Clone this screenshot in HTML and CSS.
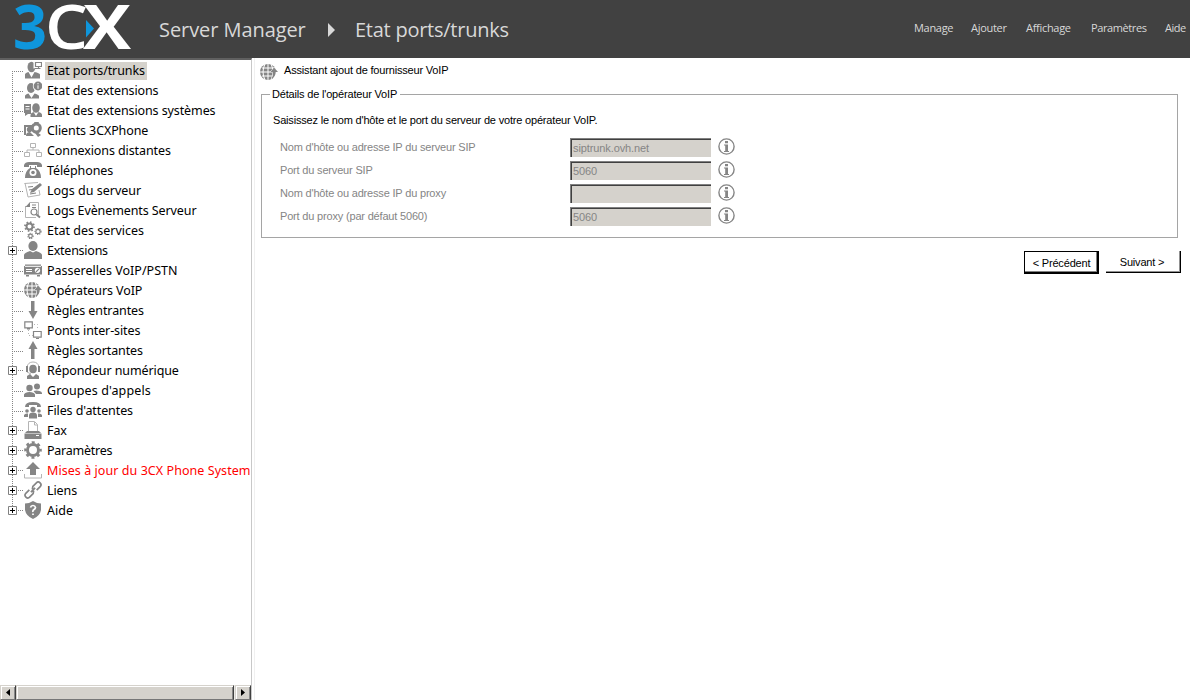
FILE: index.html
```html
<!DOCTYPE html>
<html lang="fr">
<head>
<meta charset="utf-8">
<title>3CX Server Manager</title>
<link rel="stylesheet" href="styles.css">
</head>
<body>
<svg class="defs" width="0" height="0">
  <symbol id="person" viewBox="0 0 18 18"><ellipse cx="9" cy="5" rx="4.600" ry="5"/><path d="M0 18v-4q0-2 6-4l3 1.500 3-1.500q6 2 6 4v4z"/></symbol>
  <symbol id="i-ports" viewBox="0 0 18 18"><ellipse cx="7.500" cy="6" rx="4" ry="5.200"/><path d="M1 17.500v-4q0-1.500 3.500-2.500l3 5.500 3-5.500q5 1 5.500 2.500v4z"/><path class="w" d="M9.500 0h9v7.500h-9z"/><path class="s" d="M11.500 1.500h6v4h-6zM14.500 6v1.500M10.500 7.500h6"/></symbol>
  <symbol id="i-ext" viewBox="0 0 18 18"><ellipse cx="7" cy="7" rx="4" ry="5"/><path d="M1 17.500v-2.500q0-1.500 3.500-2.500l3 4.500 3-4.500q4 1 4.500 2.500v2.500z"/><circle class="w" cx="14" cy="5" r="5.200"/><circle cx="14" cy="5" r="4.400"/><path class="ws" d="M14 4.300v3.500M14 2v1.300"/></symbol>
  <symbol id="i-sys" viewBox="0 0 18 18"><path d="M0 3h7v10H4l-3 2v-3H0z"/><path class="ws" d="M1.500 5.500h4M1.500 8h4"/><ellipse cx="12" cy="7" rx="3.800" ry="4.800"/><path d="M6.500 16v-2q0-2 3-3l2.500 4 2.500-4q3.500 1 3.500 3v2z"/></symbol>
  <symbol id="i-client" viewBox="0 0 18 18"><path d="M0 4h8v2H2v8H0z"/><circle cx="5.500" cy="8.500" r="2.700"/><path d="M2 15q0-4 4-4l4 4z"/><circle class="s3" cx="12.300" cy="7" r="4"/><path d="M10 1h5l-1 2h-3zM13 11l4 3-3 2-3-4z"/></symbol>
  <symbol id="i-remote" viewBox="0 0 18 18"><path class="l" d="M6.500 2.500h5v4h-5zM.5 11.500h5v4h-5zM12.500 11.500h5v4h-5zM9 7v2M3 11V9h12v2"/></symbol>
  <symbol id="i-phone" viewBox="0 0 18 18"><path d="M0 6V4q1-3 5-3h8q4 0 5 3v2h-5V4H5v2zM6 5h1v2h4V5h1v2q5 3 5 10H1q0-7 5-10z"/><circle class="w" cx="9" cy="11.500" r="3.500"/><circle cx="9" cy="11.500" r="1.800"/></symbol>
  <symbol id="i-log" viewBox="0 0 18 18"><path class="l" d="M.5 2.500 14 1.500M1 2l3 14 12-2-1-5"/><path class="s" d="M4 6l5-.5M5 9l3-.5M6 13l6-1"/><path d="M6 12l2-4 8-6 2 2-8 7z"/></symbol>
  <symbol id="i-event" viewBox="0 0 18 18"><path class="l" d="M6 1.500h8.500V16M1.500 5v11.500H12"/><path d="M1.500 6 6 1v5z"/><path class="s" d="M8 4h4M8 6.500h4"/><circle class="s" cx="10" cy="11" r="3"/><path class="s2" d="M12.500 13.500 16 16.500"/></symbol>
  <symbol id="i-services" viewBox="0 0 18 18"><circle class="s2" cx="5.500" cy="5.500" r="3"/><circle class="teeth" cx="5.500" cy="5.500" r="4.500"/><circle class="s" cx="14" cy="10.500" r="2.200"/><circle class="tooth" cx="14" cy="10.500" r="3"/><circle class="s" cx="6.500" cy="15" r="1.800"/><circle class="tooth" cx="6.500" cy="15" r="2.600"/></symbol>
  <symbol id="i-gateway" viewBox="0 0 18 18"><path d="M0 5h18v8.500H0zM1 3.500h16V5H1zM2 14h3v1.500H2zM13 14h3v1.500h-3z"/><path class="ws" d="M1 5.300h16M2 8.500h6M2 10.500h6"/><circle class="w" cx="13.500" cy="9.300" r="2.600"/><path class="s" d="M12 10.800 15 7.800"/></symbol>
  <symbol id="i-globe" viewBox="0 0 18 18"><circle cx="8" cy="9" r="8"/><path class="ws" d="M8 1v16M0 9h12M2 5h13M2 13h13M5 1q-4 8 0 16M11 1q4 8 0 16"/><path class="w" d="M14 4l4.500 4.500V18H13V9h-3z"/><path d="M14 4.500l4 4.500h-2.300q0 4.500-4.200 7 1.700-3 1.500-7h-2.500z"/></symbol>
  <symbol id="i-down" viewBox="0 0 18 18"><path d="M7 0h3.500v10H13.500L9 18 4.500 10H7z"/></symbol>
  <symbol id="i-up" viewBox="0 0 18 18"><path d="M7 18h3.500V8h3.000L9 0 4.500 8H7z"/></symbol>
  <symbol id="i-bridge" viewBox="0 0 18 18"><path class="s" d="M.8 .8h7.500v6H.8zM9.500 10.500h7.700v5.700H9.500zM3 8h3M12 17.500h3"/><path class="l dot" d="M10 3.500h3.500V9M4.500 9v5.500H9"/></symbol>
  <symbol id="i-voice" viewBox="0 0 18 18"><path class="l" d="M3 8V6q1-5 6-5t6 5v2M3 11l4 2"/><path d="M2 5h2v6H2zM14 5h2v6h-2z"/><ellipse cx="9" cy="8" rx="3.800" ry="4.300"/><path d="M3 18v-3l3-2 3 3 3-3 3 2v3z"/></symbol>
  <symbol id="i-group" viewBox="0 0 18 18"><circle cx="5.500" cy="7" r="3.200"/><circle cx="13" cy="5.500" r="3"/><path d="M0 16v-2.500q1-2.500 5.500-2.500t5.500 2.500V16zM9.500 10q3-1 6 0t2.500 3h-6z"/></symbol>
  <symbol id="i-queue" viewBox="0 0 18 18"><path d="M1 6q0-5 8-5t8 5h-4V4H5v2z"/><circle cx="9" cy="8.500" r="2.700"/><circle cx="3" cy="10" r="1.800"/><circle cx="15" cy="10" r="1.800"/><path d="M5 17.500v-3q0-3 4-3t4 3v3zM0 16v-2q1-2 4-1.500V16zM18 16v-2q-1-2-4-1.500V16z"/></symbol>
  <symbol id="i-fax" viewBox="0 0 18 18"><path class="l" d="M4.500 10V.5h6l3 3V10M10.500 1v3h3"/><path d="M3 10h12l2 2H1zM.5 12.500h17V18H.5z"/><path class="ws" d="M12 14.500h3"/></symbol>
  <symbol id="i-gear" viewBox="0 0 18 18"><circle class="s3" cx="9" cy="9" r="5.500"/><circle class="gear" cx="9" cy="9" r="7.600"/></symbol>
  <symbol id="i-update" viewBox="0 0 18 18"><path d="M9 1l7 7h-4v6H6V8H2z"/><path class="l" d="M.5 13v4h17v-4"/></symbol>
  <symbol id="i-link" viewBox="0 0 18 18"><g class="link" transform="rotate(-45 9 9)"><path d="M6.500 6.300H1.500Q-1 6.300-1 9t2.500 2.700h5L9 10M11.500 11.700h5Q19 11.700 19 9t-2.500-2.700h-5L9 8M6 9h6"/></g></symbol>
  <symbol id="i-help" viewBox="0 0 18 18"><path d="M9 0q4 2.500 8 2.500V9q-1 6-8 9Q2 15 1 9V2.500Q5 2.500 9 0z"/><path class="q" d="M6.500 6.500Q7 4.500 9 4.500t2.500 2q0 1-1.500 2t-1 2.500M9 12.500v1.500"/></symbol>
  <symbol id="i-info" viewBox="0 0 17 17"><circle class="ring" cx="8.500" cy="8.500" r="7.600"/><path d="M7 3h3v2.300H7zM6 6.500h4V13h1v1H6v-1h1.200V7.500H6z"/></symbol>
  <symbol id="b-first" viewBox="0 0 24 20"><path class="dots" d="M12.500 10v10M12 10.500h11"/></symbol>
  <symbol id="b-mid" viewBox="0 0 24 20"><path class="dots" d="M12.500 0v20M12 10.500h11"/></symbol>
  <symbol id="b-plus" viewBox="0 0 24 20"><path class="dots" d="M12.500 0v20M18 9.500h5"/><path class="box" d="M8.500 5.500h8v8h-8z"/><path class="plus" d="M10 9.500h5M12.500 7v5"/></symbol>
  <symbol id="b-last" viewBox="0 0 24 20"><path class="dots" d="M12.500 0v5M18 9.500h5"/><path class="box" d="M8.500 5.500h8v8h-8z"/><path class="plus" d="M10 9.500h5M12.500 7v5"/></symbol>
</svg>

<header class="topbar">
  <svg class="logo" viewBox="0 0 120 50" role="img" aria-label="3CX">
    <text class="logo-blue" x="-1" y="45" textLength="34" lengthAdjust="spacingAndGlyphs">3</text>
    <text class="logo-c" x="31" y="45" textLength="43" lengthAdjust="spacingAndGlyphs">C</text>
    <text class="logo-x" x="69" y="45" textLength="48" lengthAdjust="spacingAndGlyphs">X</text>
    <path class="logo-blue" d="M72 16l8 8.500-8 9z"/>
  </svg>
  <span class="product">Server Manager</span>
  <svg class="crumb" viewBox="0 0 7 14"><path d="M0 0l7 7-7 7z"/></svg>
  <span class="section">Etat ports/trunks</span>
  <nav class="menu"><span class="m1">Manage</span><span class="m2">Ajouter</span><span class="m3">Affichage</span><span class="m4">Paramètres</span><span class="m5">Aide</span></nav>
</header>

<div class="workspace">
  <aside class="sidebar">
    <ul class="tree">
      <li><svg class="branch"><use href="#b-first"/></svg><svg class="icon"><use href="#i-ports"/></svg><span class="label selected">Etat ports/trunks</span></li>
      <li><svg class="branch"><use href="#b-mid"/></svg><svg class="icon"><use href="#i-ext"/></svg><span class="label">Etat des extensions</span></li>
      <li><svg class="branch"><use href="#b-mid"/></svg><svg class="icon"><use href="#i-sys"/></svg><span class="label">Etat des extensions systèmes</span></li>
      <li><svg class="branch"><use href="#b-mid"/></svg><svg class="icon"><use href="#i-client"/></svg><span class="label">Clients 3CXPhone</span></li>
      <li><svg class="branch"><use href="#b-mid"/></svg><svg class="icon"><use href="#i-remote"/></svg><span class="label">Connexions distantes</span></li>
      <li><svg class="branch"><use href="#b-mid"/></svg><svg class="icon"><use href="#i-phone"/></svg><span class="label">Téléphones</span></li>
      <li><svg class="branch"><use href="#b-mid"/></svg><svg class="icon"><use href="#i-log"/></svg><span class="label even">Logs du serveur</span></li>
      <li><svg class="branch"><use href="#b-mid"/></svg><svg class="icon"><use href="#i-event"/></svg><span class="label">Logs Evènements Serveur</span></li>
      <li><svg class="branch"><use href="#b-mid"/></svg><svg class="icon"><use href="#i-services"/></svg><span class="label even">Etat des services</span></li>
      <li><svg class="branch"><use href="#b-plus"/></svg><svg class="icon"><use href="#person"/></svg><span class="label tight">Extensions</span></li>
      <li><svg class="branch"><use href="#b-mid"/></svg><svg class="icon"><use href="#i-gateway"/></svg><span class="label even">Passerelles VoIP/PSTN</span></li>
      <li><svg class="branch"><use href="#b-mid"/></svg><svg class="icon"><use href="#i-globe"/></svg><span class="label">Opérateurs VoIP</span></li>
      <li><svg class="branch"><use href="#b-mid"/></svg><svg class="icon"><use href="#i-down"/></svg><span class="label">Règles entrantes</span></li>
      <li><svg class="branch"><use href="#b-mid"/></svg><svg class="icon"><use href="#i-bridge"/></svg><span class="label">Ponts inter-sites</span></li>
      <li><svg class="branch"><use href="#b-mid"/></svg><svg class="icon"><use href="#i-up"/></svg><span class="label">Règles sortantes</span></li>
      <li><svg class="branch"><use href="#b-plus"/></svg><svg class="icon"><use href="#i-voice"/></svg><span class="label">Répondeur numérique</span></li>
      <li><svg class="branch"><use href="#b-mid"/></svg><svg class="icon"><use href="#i-group"/></svg><span class="label loose">Groupes d'appels</span></li>
      <li><svg class="branch"><use href="#b-mid"/></svg><svg class="icon"><use href="#i-queue"/></svg><span class="label">Files d'attentes</span></li>
      <li><svg class="branch"><use href="#b-plus"/></svg><svg class="icon"><use href="#i-fax"/></svg><span class="label">Fax</span></li>
      <li><svg class="branch"><use href="#b-plus"/></svg><svg class="icon"><use href="#i-gear"/></svg><span class="label tight">Paramètres</span></li>
      <li><svg class="branch"><use href="#b-plus"/></svg><svg class="icon"><use href="#i-update"/></svg><span class="label alert">Mises à jour du 3CX Phone System</span></li>
      <li><svg class="branch"><use href="#b-plus"/></svg><svg class="icon"><use href="#i-link"/></svg><span class="label">Liens</span></li>
      <li><svg class="branch"><use href="#b-last"/></svg><svg class="icon"><use href="#i-help"/></svg><span class="label even">Aide</span></li>
    </ul>
    <div class="scrollbar">
      <span class="sb-part sb-btn"><svg viewBox="0 0 4 7"><path d="M4 0v7L0 3.500z"/></svg></span>
      <span class="sb-part sb-thumb"></span>
      <span class="sb-gap"></span>
      <span class="sb-part sb-btn"><svg viewBox="0 0 4 7"><path d="M0 0v7l4-3.500z"/></svg></span>
    </div>
  </aside>

  <main class="content">
    <div class="title"><svg class="icon"><use href="#i-globe"/></svg><span>Assistant ajout de fournisseur VoIP</span></div>
    <fieldset class="panel">
      <legend>Détails de l'opérateur VoIP</legend>
      <p class="hint">Saisissez le nom d'hôte et le port du serveur de votre opérateur VoIP.</p>
      <div class="field"><label>Nom d'hôte ou adresse IP du serveur SIP</label><span class="input">siptrunk.ovh.net</span><svg class="info"><use href="#i-info"/></svg></div>
      <div class="field"><label>Port du serveur SIP</label><span class="input">5060</span><svg class="info"><use href="#i-info"/></svg></div>
      <div class="field"><label>Nom d'hôte ou adresse IP du proxy</label><span class="input"></span><svg class="info"><use href="#i-info"/></svg></div>
      <div class="field"><label>Port du proxy (par défaut 5060)</label><span class="input">5060</span><svg class="info"><use href="#i-info"/></svg></div>
    </fieldset>
    <div class="actions">
      <span class="btn btn-focus">&lt; Précédent</span>
      <span class="btn btn-next">Suivant &gt;</span>
    </div>
  </main>
</div>
</body>
</html>
```
FILE: styles.css
```css
* { box-sizing: border-box; }
body { margin: 0; width: 1190px; height: 700px; overflow: hidden; background: #fff; color: #000; display: flex; flex-direction: column; font: 11px "Liberation Sans", Arial, sans-serif; letter-spacing: -.18px; }
svg { display: block; flex: none; }
.defs { position: absolute; }

/* Header */
.topbar { height: 58px; flex: none; background: #414141; color: #d8d8d8; display: flex; align-items: flex-start; font-family: "Open Sans", "Noto Sans", sans-serif; white-space: nowrap; letter-spacing: 0; }
.logo { width: 120px; height: 50px; margin: 4px 0 0 14px; font: bold 61px "Open Sans", sans-serif; fill: #fff; overflow: visible; }
.logo-blue { fill: #0f96dc; }
.logo-c { font-weight: 600; }
.product { margin-left: 25px; width: 146px; font-size: 20px; line-height: 60px; letter-spacing: -.07px; }
.crumb { width: 7px; height: 14px; margin: 23px 0 0 23px; fill: #d8d8d8; }
.section { margin-left: 20px; font-size: 20px; line-height: 60px; letter-spacing: -.25px; }
.menu { margin-left: auto; width: 276px; display: flex; font-size: 11px; line-height: 56px; letter-spacing: -.3px; }
.m1 { width: 57px; }
.m2 { width: 55px; }
.m3 { width: 65px; }
.m4 { width: 74px; letter-spacing: -.4px; }
.m5 { letter-spacing: -.5px; }

/* Navigation tree */
.workspace { flex: 1; display: flex; min-height: 0; }
.sidebar { width: 252px; flex: none; border-top: 2px solid #606060; border-right: 1px solid #c8c8c8; display: flex; flex-direction: column; overflow: hidden; }
.tree { list-style: none; margin: 0; padding: 1px 0 0; flex: 1; font: 12.5px "Noto Sans", "Open Sans", sans-serif; letter-spacing: -.1px; }
.tree li { height: 20px; display: flex; align-items: center; white-space: nowrap; }
.branch { width: 24px; height: 20px; }
.icon { width: 18px; height: 18px; fill: #858585; }
.tree .icon { margin-top: -2px; }
.label { margin-left: 3px; padding: 0 2px; height: 20px; line-height: 20px; }
.selected { height: 18px; line-height: 18px; margin-top: 0; background: #d5d2cc; }
.tight { letter-spacing: -.25px; }
.even { letter-spacing: 0; }
.loose { letter-spacing: .12px; }
.alert { color: #f00; letter-spacing: .06px; }

/* Icon strokes */
.w { fill: #fff; }
.s, .s2, .s3, .l, .ws, .q, .dots, .box, .plus, .teeth, .tooth, .gear, .ring, .link { fill: none; stroke: #858585; stroke-width: 1.2; }
.s2 { stroke-width: 2; }
.s3 { stroke-width: 3; }
.l { stroke: #b4b4b4; stroke-width: 1; }
.dot { stroke-dasharray: 1 2; }
.ws { stroke: #fff; stroke-width: 1; }
.q { stroke: #fff; stroke-width: 1.7; }
.link { stroke-width: 1.7; }
.dots { stroke: #858585; stroke-width: 1; stroke-dasharray: 1 1; }
.box { fill: #fff; stroke: #808080; stroke-width: 1; }
.plus { stroke: #000; stroke-width: 1; }
.teeth { stroke-width: 1.8; stroke-dasharray: 1.500 2.034; }
.tooth { stroke-dasharray: 1.100 1.100; }
.gear { stroke-width: 2.400; stroke-dasharray: 3 2.969; stroke-dashoffset: 1.5; }
.ring { stroke-width: 1.4; }

/* Scrollbar */
.scrollbar { height: 15px; flex: none; display: flex; background: #eae9e6; }
.sb-part { background: #d5d2cc; border: 1px solid #d5d2cc; border-right-color: #404040; border-bottom-color: #777; box-shadow: inset 1px 1px #fff, inset -1px 0 #888; height: 15px; }
.sb-btn { width: 16px; display: flex; align-items: center; justify-content: center; }
.sb-btn svg { width: 4px; height: 7px; }
.sb-thumb { width: 218px; }
.sb-gap { flex: 1; }

/* Main area */
.content { flex: 1; min-width: 0; margin-left: 2px; border-left: 1px solid #f0f0f0; padding: 0 9px 0 5px; white-space: nowrap; }
.title { height: 35px; padding-top: 5px; display: flex; gap: 6px; }
.title span { line-height: 14px; }
.panel { margin: -5px 3px 0 1px; padding: 0; border: 1px solid #a5a5a5; height: 150px; width: 917px; }
.panel legend { margin-left: 8px; padding: 0 3px 0 2px; height: 13px; line-height: 13px; }
.hint { margin: 12px 0 11px 11px; line-height: 14px; }
.field { height: 23px; padding-left: 18px; display: flex; align-items: flex-start; color: #858585; }
.field label { width: 290px; line-height: 18px; }
.input { width: 141px; height: 19px; border: solid #808080; border-width: 1px 0 0 1px; box-shadow: inset 1px 1px #404040; background: #d5d2cc; padding: 1px 0 0 2px; line-height: 16px; letter-spacing: -.1px; }
.info { width: 17px; height: 17px; margin-left: 7px; fill: #858585; }
.actions { margin-top: 12px; padding-top: 1px; display: flex; justify-content: flex-end; gap: 7px; }
.btn { height: 23px; line-height: 23px; text-align: center; }
.btn-focus { width: 75px; border: 1px solid #000; box-shadow: inset -1px -1px #000, inset -2px -2px #808080; }
.btn-next { width: 75px; height: 22px; line-height: 22px; padding-right: 2px; border: solid #000; border-width: 0 1px 1px 0; box-shadow: inset -1px -1px #909090; }
```
